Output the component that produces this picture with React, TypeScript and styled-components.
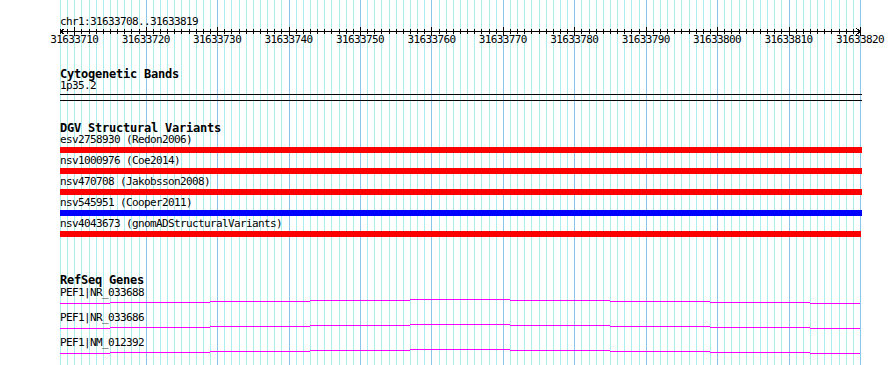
import React from "react";
import styled, { createGlobalStyle } from "styled-components";

// view window: 31633708..31633820 drawn over 800px starting at x=60
const START = 31633708;
const END = 31633820;
const LEFT = 60;
const SPAN = 800;
const PX = SPAN / (END - START);
const toX = (pos: number) => (pos - START) * PX;

const GlobalStyle = createGlobalStyle`
  html, body {
    margin: 0;
    padding: 0;
    background: #ffffff;
  }
`;

const Page = styled.div`
  position: relative;
  width: 890px;
  height: 365px;
  overflow: hidden;
  background: #ffffff;
  color: #000000;
`;

const GridLayer = styled.svg`
  position: absolute;
  top: 0;
  left: 0;
  z-index: 0;
  pointer-events: none;
`;

const Panel = styled.div`
  position: relative;
  z-index: 1;
  display: flex;
  flex-direction: column;
  width: 802px;
  padding-left: ${LEFT}px;
`;

const SmallText = styled.div<{ $mt?: number }>`
  font-family: "DejaVu Sans Mono", "Liberation Mono", monospace;
  font-size: 11px;
  letter-spacing: -0.62px;
  line-height: 10px;
  height: 10px;
  white-space: nowrap;
  margin-top: ${(p) => p.$mt ?? 0}px;
`;

const TrackTitle = styled.div<{ $mt: number }>`
  font-family: "DejaVu Sans Mono", "Liberation Mono", monospace;
  font-weight: bold;
  font-size: 12px;
  letter-spacing: -0.22px;
  line-height: 12px;
  height: 12px;
  white-space: nowrap;
  margin-top: ${(p) => p.$mt}px;
`;

const RulerSvg = styled.svg`
  display: block;
  overflow: visible;
`;

const RulerLabels = styled.div`
  display: flex;
  margin-top: -1px;
  margin-left: ${toX(31633710) - 5 * PX}px;
`;

const RulerLabel = styled(SmallText)`
  flex: 0 0 ${10 * PX}px;
  text-align: center;
`;

const BandBox = styled.div`
  height: 5px;
  margin-top: 3px;
  border-top: 1px solid #000;
  border-bottom: 1px solid #000;
`;

const FeatureRows = styled.div<{ $gap: number; $mt: number }>`
  display: flex;
  flex-direction: column;
  gap: ${(p) => p.$gap}px;
  margin-top: ${(p) => p.$mt}px;
`;

const FeatureRow = styled.div`
  display: flex;
  flex-direction: column;
`;

const Bar = styled.div<{ $color: string; $w: number }>`
  width: ${(p) => p.$w}px;
  height: 6px;
  margin-top: 2px;
  background: ${(p) => p.$color};
`;

const GeneLine = styled.div`
  display: flex;
  height: 5px;
  margin-top: 1px;
`;

const Segment = styled.div<{ $w: number; $dy: number }>`
  flex: 0 0 ${(p) => p.$w}px;
  height: 1px;
  margin-top: ${(p) => p.$dy}px;
  background: #ff00ff;
`;

const variants = [
  { name: "esv2758930 (Redon2006)", color: "#ff0000", w: 802 },
  { name: "nsv1000976 (Coe2014)", color: "#ff0000", w: 802 },
  { name: "nsv470708 (Jakobsson2008)", color: "#ff0000", w: 802 },
  { name: "nsv545951 (Cooper2011)", color: "#0000ff", w: 802 },
  { name: "nsv4043673 (gnomADStructuralVariants)", color: "#ff0000", w: 801 },
];

const genes = ["PEF1|NR_033688", "PEF1|NR_033686", "PEF1|NM_012392"];

// the transcript line sags a pixel per 100px toward the ends
const geneSegments = [
  { w: 50, dy: 4 },
  { w: 100, dy: 3 },
  { w: 100, dy: 2 },
  { w: 100, dy: 1 },
  { w: 100, dy: 0 },
  { w: 100, dy: 1 },
  { w: 100, dy: 2 },
  { w: 100, dy: 3 },
  { w: 50, dy: 4 },
];

const bases = Array.from({ length: END - START + 1 }, (_, i) => START + i);

const Grid = () => (
  <GridLayer width={890} height={365} shapeRendering="crispEdges">
    {bases.map((b) => (
      <rect
        key={b}
        x={Math.round(LEFT + toX(b))}
        y={0}
        width={1}
        height={365}
        fill={b % 10 === 0 && b !== 31633710 ? "#88c6ec" : "#aaeeee"}
      />
    ))}
  </GridLayer>
);

const Ruler = () => (
  <RulerSvg width={802} height={9} shapeRendering="crispEdges">
    <rect x={0} y={4} width={801} height={1} fill="#000" />
    {bases.map((b) => {
      const major = b % 10 === 0;
      return (
        <rect
          key={b}
          x={Math.round(toX(b))}
          y={major ? 0 : 2}
          width={1}
          height={major ? 9 : 5}
          fill="#000"
        />
      );
    })}
    <path d="M4.5 1.5 L0.5 4.5 L4.5 7.5" stroke="#000" fill="none" />
    <path d="M796.5 1.5 L800.5 4.5 L796.5 7.5" stroke="#000" fill="none" />
  </RulerSvg>
);

const labels = bases.filter((b) => b % 10 === 0);

export default function App() {
  return (
    <>
      <GlobalStyle />
      <Page>
        <Grid />
        <Panel>
          <SmallText $mt={17}>chr1:31633708..31633819</SmallText>
          <Ruler />
          <RulerLabels>
            {labels.map((b) => (
              <RulerLabel key={b}>{b}</RulerLabel>
            ))}
          </RulerLabels>

          <TrackTitle $mt={23}>Cytogenetic Bands</TrackTitle>
          <SmallText $mt={1}>1p35.2</SmallText>
          <BandBox />

          <TrackTitle $mt={21}>DGV Structural Variants</TrackTitle>
          <FeatureRows $gap={3} $mt={1}>
            {variants.map((v) => (
              <FeatureRow key={v.name}>
                <SmallText>{v.name}</SmallText>
                <Bar $color={v.color} $w={v.w} />
              </FeatureRow>
            ))}
          </FeatureRows>

          <TrackTitle $mt={37}>RefSeq Genes</TrackTitle>
          <FeatureRows $gap={9} $mt={2}>
            {genes.map((g) => (
              <FeatureRow key={g}>
                <SmallText>{g}</SmallText>
                <GeneLine>
                  {geneSegments.map((s, i) => (
                    <Segment key={i} $w={s.w} $dy={s.dy} />
                  ))}
                </GeneLine>
              </FeatureRow>
            ))}
          </FeatureRows>
        </Panel>
      </Page>
    </>
  );
}
